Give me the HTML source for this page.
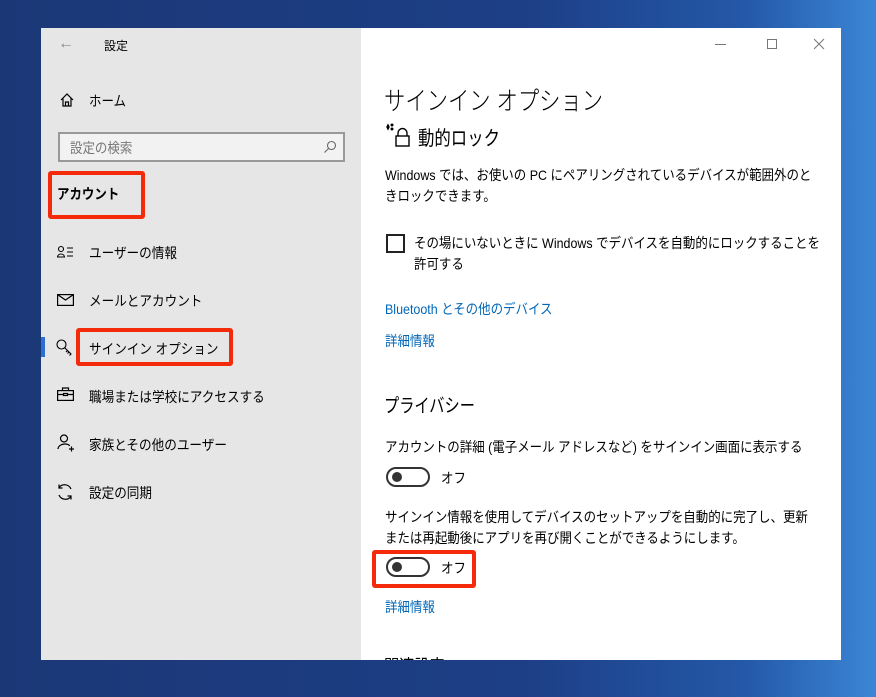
<!DOCTYPE html>
<html><head><meta charset="utf-8"><style>
*{margin:0;padding:0;box-sizing:border-box}
body{width:876px;height:697px;overflow:hidden;position:relative;background:linear-gradient(90deg,#1b3776 0%,#1d3f86 60%,#2458a8 85%,#3c86d6 100%);font-family:"Liberation Sans","Noto Sans CJK JP",sans-serif;color:#000}
.a{position:absolute;white-space:nowrap;transform-origin:left center}
.s{transform:scaleX(.89)}
#left{position:absolute;left:41px;top:28px;width:320px;height:632px;background:#e6e6e6}
#right{position:absolute;left:361px;top:28px;width:480px;height:632px;background:#fff;overflow:hidden}
.t{font-size:14px}
.nav{font-size:14px;left:89px;transform:scaleX(.9)}
.blue{color:#0067b8}
.red{position:absolute;border:4px solid #f42a0b;border-radius:3px}
.tog{position:absolute;width:44px;height:20px;border:2px solid #333;border-radius:10px}
.tog:after{content:"";position:absolute;left:4px;top:3px;width:10px;height:10px;border-radius:50%;background:#333}
svg{position:absolute}
</style></head><body>
<div id="left">
<div class="a" style="left:17px;top:7px;font-size:16px;color:#888">←</div>
<div class="a t" style="left:63px;top:9px;font-size:12px">設定</div>
<svg style="left:18px;top:64px" width="16" height="16" viewBox="0 0 16 16" fill="none" stroke="#000" stroke-width="1.2"><path d="M2 8L8 2L14 8M4 6V14H12V6M6.5 14V10H9.5V14"/></svg>
<div class="a t s" style="left:48px;top:63px">ホーム</div>
<div style="position:absolute;left:17px;top:104px;width:287px;height:30px;border:2px solid #999;background:#f2f2f2"></div>
<div class="a t s" style="left:29px;top:110px;color:#777">設定の検索</div>
<svg style="left:282px;top:112px" width="14" height="14" viewBox="0 0 14 14" fill="none" stroke="#666" stroke-width="1.1"><circle cx="8.5" cy="5.5" r="4"/><path d="M5.5 8.5L1.5 12.5"/></svg>
<div class="a s" style="left:16px;top:156px;font-size:14px;font-weight:bold">アカウント</div>
</div>
<div class="red" style="left:48px;top:171px;width:97px;height:48px"></div>
<svg style="left:57px;top:245px" width="18" height="14" viewBox="0 0 18 14" fill="none" stroke="#000" stroke-width="1.1"><circle cx="4" cy="4" r="2.5"/><path d="M0.5 12C1 8 7 8 7.5 12Z M10 3H16M10 7H16M10 11H16"/></svg>
<div class="a nav" style="top:243px">ユーザーの情報</div>
<svg style="left:57px;top:294px" width="17" height="12" viewBox="0 0 17 12" fill="none" stroke="#000" stroke-width="1.2"><rect x="0.6" y="0.6" width="15.8" height="10.8"/><path d="M0.6 0.6L8.5 6L16.4 0.6"/></svg>
<div class="a nav" style="top:291px">メールとアカウント</div>
<div style="position:absolute;left:41px;top:337px;width:4px;height:20px;background:#2c6fd0"></div>
<svg style="left:56px;top:339px" width="18" height="18" viewBox="0 0 18 18" fill="none" stroke="#000" stroke-width="1.1"><circle cx="5.5" cy="5.5" r="4.5"/><path d="M8.5 8.5L15 15L13.5 16.5M11.5 11.5L10 13M13 13L11.5 14.5"/></svg>
<div class="red" style="left:76px;top:328px;width:157px;height:38px"></div>
<div class="a nav" style="top:339px">サインイン オプション</div>
<svg style="left:57px;top:387px" width="17" height="14" viewBox="0 0 17 14" fill="none" stroke="#000" stroke-width="1.2"><rect x="0.6" y="3.6" width="15.8" height="9.8"/><path d="M5.5 3.6V1H11.5V3.6M0.6 7.5H6.5M10.5 7.5H16.4M6.5 6.5H10.5V8.5H6.5Z"/></svg>
<div class="a nav" style="top:387px">職場または学校にアクセスする</div>
<svg style="left:57px;top:434px" width="18" height="18" viewBox="0 0 18 18" fill="none" stroke="#000" stroke-width="1.2"><circle cx="7" cy="4.5" r="3.5"/><path d="M1 15C1.5 9 12 9 12.5 12M12 15H17M14.5 12.5V17.5"/></svg>
<div class="a nav" style="top:435px">家族とその他のユーザー</div>
<svg style="left:56px;top:483px" width="18" height="18" viewBox="0 0 18 18" fill="none" stroke="#000" stroke-width="1.2"><path d="M15 6A7 7 0 0 0 3 4.5M3 12A7 7 0 0 0 15 13.5M3 1.5V5H6.5M15 16.5V13H11.5"/></svg>
<div class="a nav" style="top:483px">設定の同期</div>

<div id="right">
<div style="position:absolute;left:354px;top:16px;width:11px;height:1px;background:#777"></div>
<div style="position:absolute;left:406px;top:11px;width:10px;height:10px;border:1px solid #777"></div>
<svg style="left:452px;top:10px" width="12" height="12" viewBox="0 0 12 12" stroke="#777" stroke-width="1"><path d="M1 1L11 11M11 1L1 11"/></svg>
<div class="a" style="left:23px;top:53px;font-size:26px;font-weight:300;transform:scaleX(.82)">サインイン オプション</div>
<svg style="left:24px;top:95px" width="26" height="24" viewBox="0 0 26 24" fill="none" stroke="#000" stroke-width="1.4"><path d="M3 2L4 4L3 6L2 4Z" fill="#000"/><circle cx="7" cy="2" r="0.8" fill="#000"/><circle cx="7" cy="6" r="0.8" fill="#000"/><rect x="11" y="13" width="13" height="10"/><path d="M13 13V10A4.5 4.5 0 0 1 22 10V13"/></svg>
<div class="a" style="left:57px;top:94px;font-size:20px;transform:scaleX(.82)">動的ロック</div>
<div class="a t s" style="left:24px;top:137px;line-height:21px">Windows では、お使いの PC にペアリングされているデバイスが範囲外のと<br>きロックできます。</div>
<div style="position:absolute;left:25px;top:206px;width:19px;height:19px;border:2px solid #222"></div>
<div class="a t s" style="left:53px;top:205px;line-height:21px">その場にいないときに Windows でデバイスを自動的にロックすることを<br>許可する</div>
<div class="a t blue s" style="left:24px;top:271px">Bluetooth とその他のデバイス</div>
<div class="a t blue s" style="left:24px;top:303px">詳細情報</div>
<div class="a" style="left:23px;top:363px;font-size:19px;transform:scaleX(.8)">プライバシー</div>
<div class="a t s" style="left:24px;top:409px">アカウントの詳細 (電子メール アドレスなど) をサインイン画面に表示する</div>
<div class="tog" style="left:25px;top:439px"></div>
<div class="a t s" style="left:80px;top:440px">オフ</div>
<div class="a t s" style="left:24px;top:479px;line-height:21px">サインイン情報を使用してデバイスのセットアップを自動的に完了し、更新<br>または再起動後にアプリを再び開くことができるようにします。</div>
<div class="tog" style="left:25px;top:529px"></div>
<div class="a t s" style="left:80px;top:530px">オフ</div>
<div class="a t blue s" style="left:24px;top:569px">詳細情報</div>
<div class="a" style="left:23px;top:624px;font-size:19px;transform:scaleX(.8)">関連設定</div>
</div>
<div class="red" style="left:372px;top:550px;width:104px;height:38px"></div>
</body></html>
